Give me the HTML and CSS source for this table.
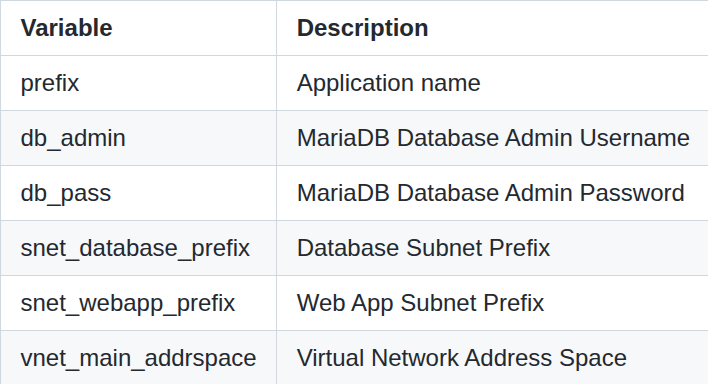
FILE: index.html
```html
<!DOCTYPE html>
<html lang="en">
<head>
    <meta charset="UTF-8">
    <meta name="viewport" content="width=device-width, initial-scale=1.0">
    <title>Variables</title>
    <link rel="stylesheet" href="styles.css">
</head>
<body>
    <table class="vars-table">
        <thead>
            <tr>
                <th>Variable</th>
                <th>Description</th>
            </tr>
        </thead>
        <tbody>
            <tr>
                <td>prefix</td>
                <td>Application name</td>
            </tr>
            <tr>
                <td>db_admin</td>
                <td>MariaDB Database Admin Username</td>
            </tr>
            <tr>
                <td>db_pass</td>
                <td>MariaDB Database Admin Password</td>
            </tr>
            <tr>
                <td>snet_database_prefix</td>
                <td>Database Subnet Prefix</td>
            </tr>
            <tr>
                <td>snet_webapp_prefix</td>
                <td>Web App Subnet Prefix</td>
            </tr>
            <tr>
                <td>vnet_main_addrspace</td>
                <td>Virtual Network Address Space</td>
            </tr>
        </tbody>
    </table>
</body>
</html>
```

FILE: styles.css
```css
body {
    margin: 0;
    background-color: #fff;
    font-family: "Liberation Sans", Arial, sans-serif;
    color: #24292f;
    overflow: hidden;
}

.vars-table {
    border-collapse: collapse;
    border-spacing: 0;
    font-size: 24px;
    line-height: 36px;
}

.vars-table th,
.vars-table td {
    padding: 9px 19.5px;
    border: 1px solid #d0d7de;
    text-align: left;
    white-space: nowrap;
}

.vars-table th {
    font-weight: bold;
}

.vars-table tr {
    background-color: #fff;
}

.vars-table tbody tr:nth-child(2n) {
    background-color: #f6f8fa;
}
```
